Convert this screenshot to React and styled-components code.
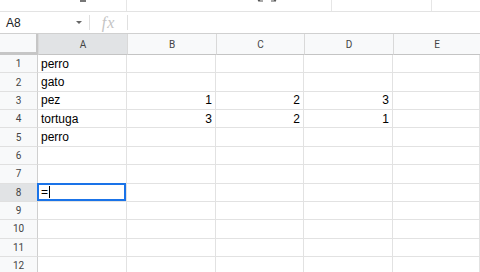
import React from "react";
import styled, { createGlobalStyle } from "styled-components";

const Global = createGlobalStyle`
  html, body { margin: 0; padding: 0; background: #fff; overflow: hidden; }
  body { width: 480px; height: 272px; font-family: Arial, "Liberation Sans", sans-serif; }
`;

const Page = styled.div`
  width: 480px;
  height: 272px;
  display: flex;
  flex-direction: column;
  overflow: hidden;
`;

const Toolbar = styled.div`
  height: 11px;
  flex: none;
  border-bottom: 1px solid #e3e3e3;
  display: flex;
  align-items: flex-start;
  position: relative;
  overflow: hidden;
`;

const ToolGroup = styled.div`
  width: ${(p) => p.$w}px;
  height: 11px;
  flex: none;
  display: flex;
  align-items: flex-start;
  justify-content: ${(p) => p.$justify || "flex-start"};
  border-right: ${(p) => (p.$divider ? "1px solid #e6e6e6" : "none")};
  box-sizing: border-box;
`;

const FormulaBar = styled.div`
  height: 21px;
  flex: none;
  display: flex;
  align-items: center;
  border-bottom: 1px solid #d0d0d0;
`;

const NameBox = styled.div`
  width: 89px;
  height: 100%;
  box-sizing: border-box;
  display: flex;
  align-items: center;
  justify-content: space-between;
  padding: 0 7px 0 6px;
  font-size: 12px;
  color: #202124;
`;

const Caret = styled.span`
  width: 0;
  height: 0;
  border-left: 3px solid transparent;
  border-right: 3px solid transparent;
  border-top: 3px solid #666;
`;

const Divider = styled.div`
  width: 1px;
  height: 15px;
  background: #e0e0e0;
  flex: none;
`;

const Fx = styled.div`
  width: 37px;
  text-align: center;
  font-family: "Liberation Serif", "DejaVu Serif", serif;
  font-style: italic;
  font-size: 16px;
  color: #c4c4c4;
  line-height: 21px;
  letter-spacing: 1px;
`;

const Grid = styled.div`
  display: grid;
  grid-template-columns: 38px 89px 89px 88px 89px 1fr;
  grid-template-rows: 21px;
  grid-auto-rows: 18.36px;
  font-size: 12px;
  color: #000;
`;

const Corner = styled.div`
  background: #f8f9fa;
  border-right: 3px solid #c6c6c6;
  border-bottom: 3px solid #c6c6c6;
  box-sizing: border-box;
  margin-right: -1px;
`;

const ColHead = styled.div`
  background: ${(p) => (p.$active ? "#e1e3e5" : "#f8f9fa")};
  border-left: 1px solid #d9d9d9;
  border-bottom: 1px solid #c4c4c4;
  box-sizing: border-box;
  display: flex;
  align-items: center;
  justify-content: center;
  font-family: Roboto, "Liberation Sans", sans-serif;
  font-size: 10px;
  color: #444;
  padding-top: 1px;
`;

const RowHead = styled.div`
  background: ${(p) => (p.$active ? "#e1e3e5" : "#f8f9fa")};
  border-bottom: 1px solid #e0e0e0;
  border-right: 1px solid #cfcfcf;
  box-sizing: border-box;
  display: flex;
  align-items: center;
  justify-content: center;
  font-family: Roboto, "Liberation Sans", sans-serif;
  font-size: 10px;
  color: #444;
`;

const Cell = styled.div`
  border-right: 1px solid #e2e2e2;
  border-bottom: 1px solid #e2e2e2;
  box-sizing: border-box;
  display: flex;
  align-items: center;
  justify-content: ${(p) => (p.$num ? "flex-end" : "flex-start")};
  padding: 0 3px 0 3px;
  white-space: nowrap;
  position: relative;
`;

const Selection = styled.div`
  position: absolute;
  left: -1px;
  top: -1px;
  right: 0;
  bottom: 0;
  border: 2px solid #1a73e8;
  display: flex;
  align-items: center;
  padding-left: 2px;
  box-sizing: border-box;
`;

const Cursor = styled.span`
  display: inline-block;
  width: 1px;
  height: 12px;
  background: #000;
  margin-left: 1px;
`;

const cols = ["A", "B", "C", "D", "E"];
const data = {
  1: ["perro"],
  2: ["gato"],
  3: ["pez", 1, 2, 3],
  4: ["tortuga", 3, 2, 1],
  5: ["perro"],
};

export default function App() {
  const rows = Array.from({ length: 12 }, (_, i) => i + 1);
  return (
    <Page>
      <Global />
      <Toolbar>
        <ToolGroup $w={78} />
        <ToolGroup $w={49} $divider>
          <svg width="10" height="4" viewBox="0 0 10 4">
            <rect x="2" y="0" width="6" height="2" fill="#777" />
          </svg>
        </ToolGroup>
        <ToolGroup $w={205} $divider $justify="flex-end">
          <svg width="90" height="4" viewBox="0 0 90 4">
            <path d="M17 1h5M17 1l2 -1.5" stroke="#555" strokeWidth="1.2" fill="none" />
            <path d="M30 1h5M35 1l-2 -1.5" stroke="#555" strokeWidth="1.2" fill="none" />
          </svg>
        </ToolGroup>
        <ToolGroup $w={100} $divider />
      </Toolbar>
      <FormulaBar>
        <NameBox>
          <span>A8</span>
          <Caret />
        </NameBox>
        <Divider />
        <Fx>fx</Fx>
        <Divider />
      </FormulaBar>
      <Grid>
        <Corner />
        {cols.map((c) => (
          <ColHead key={c} $active={c === "A"}>
            {c}
          </ColHead>
        ))}
        {rows.map((r) => (
          <React.Fragment key={r}>
            <RowHead $active={r === 8}>{r}</RowHead>
            {cols.map((c, ci) => {
              const v = data[r] ? data[r][ci] : undefined;
              const isNum = typeof v === "number";
              return (
                <Cell key={c} $num={isNum}>
                  {v}
                  {r === 8 && ci === 0 && (
                    <Selection>
                      =<Cursor />
                    </Selection>
                  )}
                </Cell>
              );
            })}
          </React.Fragment>
        ))}
      </Grid>
    </Page>
  );
}
